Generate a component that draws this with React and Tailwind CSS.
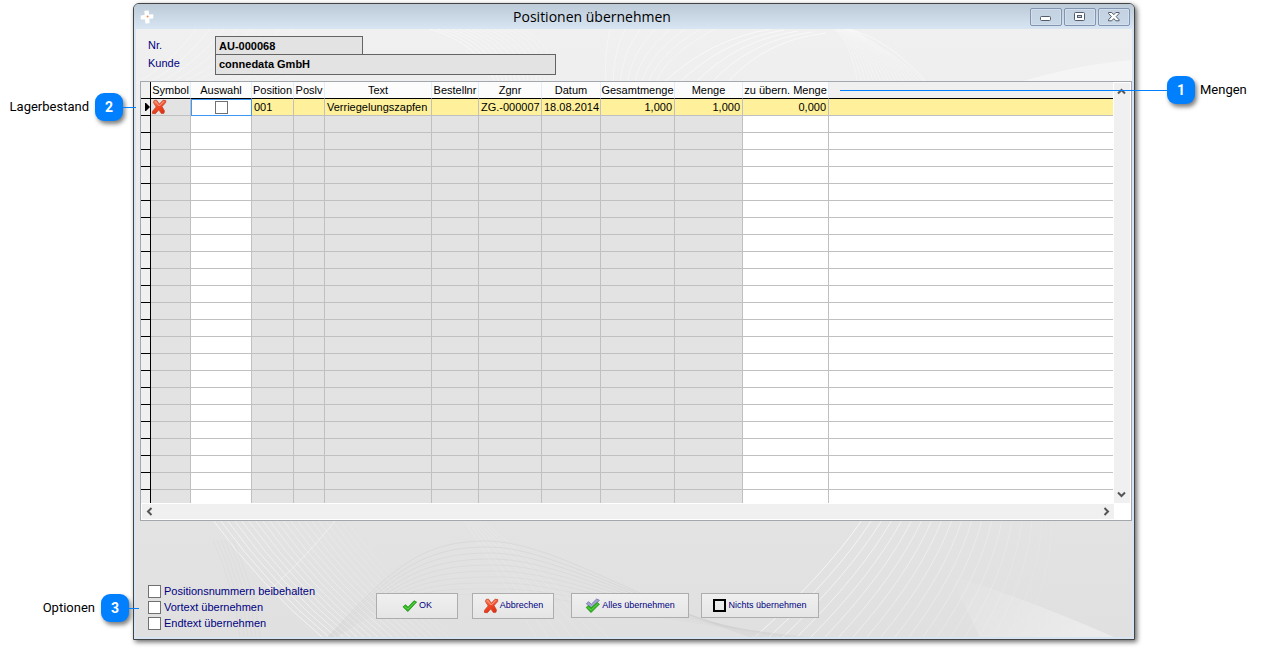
import React from "react";

const columns = [
  { label: "Symbol", width: "w-[40px]", align: "text-center", editable: false },
  { label: "Auswahl", width: "w-[61px]", align: "text-center", editable: true },
  { label: "Position", width: "w-[42px]", align: "text-left", value: "001" },
  { label: "Poslv", width: "w-[31px]", align: "text-left", value: "" },
  { label: "Text", width: "w-[107px]", align: "text-left", value: "Verriegelungszapfen" },
  { label: "Bestellnr", width: "w-[47px]", align: "text-left", value: "" },
  { label: "Zgnr", width: "w-[63px]", align: "text-left", value: "ZG.-000007" },
  { label: "Datum", width: "w-[59px]", align: "text-left", value: "18.08.2014" },
  { label: "Gesamtmenge", width: "w-[74px]", align: "text-right", value: "1,000" },
  { label: "Menge", width: "w-[68px]", align: "text-right", value: "1,000" },
  { label: "zu übern. Menge", width: "w-[86px]", align: "text-right", value: "0,000", editable: true },
];

const range = (n) => Array.from({ length: n }, (_, i) => i);

function CrossIcon({ className }) {
  return (
    <svg viewBox="0 0 16 16" className={className} aria-hidden="true">
      <defs>
        <linearGradient id="cross" x1="0" y1="0" x2="0.4" y2="1">
          <stop offset="0" stopColor="#ff8a62" />
          <stop offset="0.55" stopColor="#f24a28" />
          <stop offset="1" stopColor="#e03412" />
        </linearGradient>
      </defs>
      <path
        d="M3.2 1.4 5.6 1.2 8.4 5.2 12 1.2 14.8 1.6 14.6 3.6 11 7.6 13.4 11.8 13 14.2 10.4 14.5 7.8 10.8 4.4 14.7 1.4 14.4 1.6 12.2 5.2 7.9 2.4 3.4Z"
        fill="url(#cross)"
        stroke="#c94027"
        strokeWidth="0.8"
        strokeLinejoin="round"
      />
      <path d="M4.2 2.4 8.3 7 12.8 2.4" fill="none" stroke="#ffb199" strokeWidth="0.9" />
    </svg>
  );
}

function CheckIcon({ className }) {
  return (
    <svg viewBox="0 0 16 14" className={className} aria-hidden="true">
      <path
        d="M1 7.8 3.6 5.8 6 8.2 12 1.8 14.6 3 5.8 12.6Z"
        fill="#2fb51f"
        stroke="#1f8f16"
        strokeWidth="0.8"
        strokeLinejoin="round"
      />
      <path d="M2.4 7.4 6 10 13 2.8" fill="none" stroke="#6fdc55" strokeWidth="0.8" />
    </svg>
  );
}

function DoubleCheckIcon({ className }) {
  return (
    <svg viewBox="0 0 16 16" className={className} aria-hidden="true">
      <path
        d="M1.4 5.6 3.6 3.8 6.4 6.2 11.6 1 14.4 2.2 6.4 11Z"
        fill="#a3a5d3"
        stroke="#6d6fa6"
        strokeWidth="0.8"
        strokeLinejoin="round"
      />
      <path
        d="M1.2 9.4 3.6 7.6 6.2 9.8 12.2 4.4 14.4 6.2 6 14.6Z"
        fill="#2fb51f"
        stroke="#1f8f16"
        strokeWidth="0.8"
        strokeLinejoin="round"
      />
      <path d="M2.6 9.2 6.2 12 13 5.6" fill="none" stroke="#6fdc55" strokeWidth="0.8" />
    </svg>
  );
}

function Chevron({ d }) {
  return (
    <svg viewBox="0 0 9 9" className="h-[9px] w-[9px]" aria-hidden="true">
      <path d={d} fill="none" stroke="#555" strokeWidth="2" />
    </svg>
  );
}

function Backdrop() {
  return (
    <svg
      viewBox="136 29 996 608"
      preserveAspectRatio="none"
      className="absolute inset-0 h-full w-full"
      aria-hidden="true"
    >
      <defs>
        <linearGradient id="wedge" x1="0" y1="0" x2="1" y2="0.4">
          <stop offset="0" stopColor="#fff" stopOpacity="0" />
          <stop offset="1" stopColor="#fff" stopOpacity="0.35" />
        </linearGradient>
      </defs>
      <g fill="none" stroke="#fff">
        {range(14).map((i) => (
          <path key={i} d={`M${136 + i * 11} 84 Q${172 + i * 13} 62 ${196 + i * 14} 29`} opacity={0.35 - i * 0.02} />
        ))}
        {range(14).map((i) => (
          <path key={i} d={`M${430 + i * 7} 29 Q${480 + i * 6} 44 ${496 + i * 4} 84`} opacity={0.45 - i * 0.02} />
        ))}
        {range(8).map((i) => (
          <path key={i} d={`M${606 + i * 7} 84 Q${604 + i * 9} 54 ${610 + i * 15} 29`} opacity="0.35" />
        ))}
        {range(5).map((i) => (
          <path key={i} d={`M${662 + i * 16} 84 Q${708 + i * 14} 40 ${770 + i * 14} ${29 + i}`} opacity="0.55" />
        ))}
        {range(18).map((i) => (
          <path key={i} d={`M${834 + i} 29 Q${850 + i * 3} ${40 + i} ${858 + i * 4} 84`} opacity="0.3" />
        ))}
        <path d="M846 29 Q886 36 928 84" opacity="0.5" />
      </g>
      <path d="M1020 82 Q1080 64 1132 60 V82Z" fill="#fff" opacity="0.4" />

      <g fill="none" stroke="#fff">
        {range(20).map((i) => (
          <path key={i} d={`M${213 + i * 7} 520 Q${260 + i * 7} 585 ${322 + i * 7} 637`} opacity={0.6 - i * 0.026} />
        ))}
        {range(7).map((i) => (
          <path key={i} d={`M${464 + i * 3} 520 Q${500 + i * 8} 575 ${536 + i * 12} 637`} opacity="0.15" />
        ))}
        <path d="M336 520 Q290 576 250 606" opacity="0.4" />
        {range(20).map((i) => (
          <path
            key={i}
            d={`M${755 + i * 14} 637 Q${824 + i * 12} 575 ${862 + i * 10} 520`}
            opacity={0.65 - i * 0.031}
          />
        ))}
      </g>
      <g fill="none" stroke="#cfcfcf">
        {range(10).map((i) => (
          <path
            key={i}
            d={`M${328 + i} 637 C${390 + i * 2} ${570 + i * 2} ${420 + i * 2} ${541 + i * 6} ${486 + i * 2} ${541 + i * 6} S640 ${602 + i * 2} ${752 + i * 6} 637`}
            opacity={0.5 - i * 0.03}
          />
        ))}
        {range(6).map((i) => (
          <path key={i} d={`M${213 + i * 4} 540 Q${235 + i * 4} 590 ${240 + i * 4} 637`} opacity="0.25" />
        ))}
      </g>
      <path d="M950 575 Q1030 600 1114 637 H980Z" fill="url(#wedge)" />
    </svg>
  );
}

function Badge({ children, line }) {
  return (
    <span className="relative flex h-7 w-7 shrink-0 items-center justify-center rounded-[9px] bg-[#0080ff] text-sm font-bold text-white shadow-[2px_3px_4px_rgba(0,0,0,0.5)]">
      {children}
      <span className={`absolute top-[14px] h-px bg-[#0080ff] ${line}`} />
    </span>
  );
}

function CaptionButton({ label, children }) {
  return (
    <button
      type="button"
      aria-label={label}
      className="flex h-[18px] w-8 items-center justify-center rounded-[2px] border border-[#8295b0] bg-linear-to-b from-[#c3d1e0] to-[#c9d8e8] shadow-[inset_0_0_0_1px_#d3dfec]"
    >
      <svg viewBox="0 0 12 10" className="h-[10px] w-3" aria-hidden="true">
        {children}
      </svg>
    </button>
  );
}

function ActionButton({ className, children }) {
  return (
    <button
      type="button"
      className={`flex items-center justify-center border border-[#adadad] bg-linear-to-b from-[#f0f0f0] to-[#e5e5e5] font-['Liberation_Sans',Arial,sans-serif] text-[9px] whitespace-nowrap text-[#000080] ${className}`}
    >
      {children}
    </button>
  );
}

function Option({ label }) {
  return (
    <label className="flex h-[15px] items-center gap-[3px] whitespace-nowrap">
      <input type="checkbox" className="h-[13px] w-[13px] appearance-none border border-[#707070] bg-white checked:bg-[#000080]" />
      {label}
    </label>
  );
}

function PositionsTable() {
  return (
    <table className="w-full table-fixed border-separate border-spacing-0 text-[11px] leading-4 text-black">
      <colgroup>
        <col className="w-[10px]" />
        {columns.map((c) => (
          <col key={c.label} className={c.width} />
        ))}
        <col />
      </colgroup>
      <thead>
        <tr className="h-[17px]">
          <th className="border-r border-b border-black bg-[#f0f0f0] p-0" />
          {columns.map((c) => (
            <th
              key={c.label}
              className="border-r border-b border-r-[#e3eefa] border-b-black bg-[#fcfcfc] p-0 text-center font-normal whitespace-nowrap"
            >
              {c.label}
            </th>
          ))}
          <th className="border-b border-black bg-[#f0f0f0] p-0" />
        </tr>
      </thead>
      <tbody>
        <tr className="h-[17px]">
          <td className="border-r border-b border-black bg-[#f0f0f0] p-0">
            <svg viewBox="0 0 9 8" className="block h-2 w-[9px]" aria-hidden="true">
              <path d="M4 0h1l4 4-4 4H4z" fill="#000" />
            </svg>
          </td>
          <td className="border-r border-b border-[#c0c0c0] bg-[#e3e3e3] p-0">
            <CrossIcon className="block h-4 w-4" />
          </td>
          <td className="bg-white p-0 shadow-[inset_0_0_0_1px_#3f97f5]">
            <input
              type="checkbox"
              aria-label="Auswahl"
              className="mx-auto block h-[13px] w-[13px] appearance-none border border-[#707070] bg-white checked:bg-[#000080]"
            />
          </td>
          {columns.slice(2).map((c) => (
            <td
              key={c.label}
              className={`border-r border-b border-[#c0c0c0] bg-[#fff09b] px-[2px] py-0 whitespace-nowrap ${c.align}`}
            >
              {c.value}
            </td>
          ))}
          <td className="border-b border-[#c0c0c0] bg-[#fff09b] p-0" />
        </tr>
        {range(23).map((r) => {
          const last = r === 22;
          const edge = last ? "" : "border-b";
          return (
            <tr key={r} className={last ? "h-[13px]" : "h-[17px]"}>
              <td className={`border-r border-black bg-[#f0f0f0] p-0 ${edge}`} />
              {columns.map((c) => (
                <td
                  key={c.label}
                  className={`border-r border-[#c0c0c0] p-0 ${edge} ${c.editable ? "bg-white" : "bg-[#e3e3e3]"}`}
                />
              ))}
              <td className={`border-[#c0c0c0] bg-white p-0 ${edge}`} />
            </tr>
          );
        })}
      </tbody>
    </table>
  );
}

function Window() {
  return (
    <main className="flex min-w-0 flex-1 flex-col rounded-t-[6px] border border-[#444] bg-[#d7e4f2] px-[2px] pb-[2px] shadow-[2px_2px_5px_rgba(0,0,0,0.6)]">
      <header className="-mx-[2px] flex h-[25px] items-center rounded-t-[5px] bg-linear-to-b from-[#bccad8] to-[#d8e5f3] pr-1 pl-[6px]">
        <svg viewBox="0 0 14 14" className="h-[14px] w-[14px] shrink-0" aria-hidden="true">
          <path d="M4.4.8 8.8.4 9 4.6 13.4 4.2 13.2 8.6 9.4 8.8 9.6 13.2 5.4 13.4 5 9.4.8 9.6.6 5.6 4.6 5Z" fill="#fff" />
          <circle cx="7.6" cy="6.4" r="1" fill="#f08a4a" />
        </svg>
        <h1 className="flex-1 text-center font-['Open_Sans','Noto_Sans',sans-serif] text-sm leading-5 font-normal text-black">
          Positionen übernehmen
        </h1>
        <div className="flex gap-[2px]">
          <CaptionButton label="Minimieren">
            <rect x="0.5" y="4.5" width="10" height="4" rx="1" fill="#fff" stroke="#515b6b" />
          </CaptionButton>
          <CaptionButton label="Maximieren">
            <rect x="0.5" y="0.5" width="10" height="8" rx="1" fill="#fff" stroke="#515b6b" />
            <rect x="3.5" y="3.5" width="4" height="2" fill="#c3d1e0" stroke="#515b6b" />
          </CaptionButton>
          <CaptionButton label="Schließen">
            <path
              d="M.5.5h3.200L5.800 2.700 7.900.5h3.200v1L8.200 4.600 11.100 7.800v1H7.900L5.800 6.600 3.700 8.800H.5v-1L3.400 4.600.5 1.500z"
              fill="#fff"
              stroke="#515b6b"
            />
          </CaptionButton>
        </div>
      </header>

      <div className="relative flex flex-col bg-linear-to-b from-[#f0f0f0] to-[#e0e0e0]">
        <Backdrop />
        <div className="relative flex flex-col pl-1">
          <div className="grid grid-cols-[67px_1fr] pt-[7px] pl-2 text-[11px] text-[#000080]">
            <label htmlFor="nr" className="flex h-[18px] items-center">Nr.</label>
            <input
              id="nr"
              readOnly
              defaultValue="AU-000068"
              className="h-[19px] w-[148px] border border-[#646464] bg-[#e3e3e3] px-[3px] font-bold text-black"
            />
            <label htmlFor="kunde" className="flex h-4 items-center">Kunde</label>
            <input
              id="kunde"
              readOnly
              defaultValue="connedata GmbH"
              className="-mt-px h-[21px] w-[341px] border border-[#646464] bg-[#e3e3e3] px-[3px] pb-[2px] font-bold text-black"
            />
          </div>

          <section className="mt-[6px] border border-[#a3a8ae] bg-white">
            <div className="flex">
              <div className="min-w-0 flex-1">
                <PositionsTable />
              </div>
              <div className="mt-px mr-px ml-px flex w-4 flex-col items-center justify-between bg-[#f0f0f0] py-1 pr-[2px]">
                <Chevron d="M1 6.500 4.500 3 8 6.500" />
                <Chevron d="M1 2.500 4.500 6 8 2.500" />
              </div>
            </div>
            <div className="mt-px mr-[17px] mb-px ml-px flex h-[15px] items-center justify-between bg-[#f0f0f0] px-[3px]">
              <Chevron d="M6.500 1 3 4.500 6.500 8" />
              <Chevron d="M2.500 1 6 4.500 2.500 8" />
            </div>
          </section>

          <footer className="flex items-start pt-[63px] pb-[6px] pl-2 text-[11px] text-[#000080]">
            <div className="flex w-[228px] flex-col gap-px">
              <Option label="Positionsnummern beibehalten" />
              <Option label="Vortext übernehmen" />
              <Option label="Endtext übernehmen" />
            </div>
            <div className="flex items-start gap-[14px] pt-[9px]">
              <ActionButton className="h-[26px] w-[82px] gap-px">
                <CheckIcon className="h-[14px] w-4" />
                OK
              </ActionButton>
              <ActionButton className="h-[26px] w-[82px] gap-px">
                <CrossIcon className="h-4 w-4" />
                Abbrechen
              </ActionButton>
              <ActionButton className="ml-[3px] h-[25px] w-[118px] gap-px">
                <DoubleCheckIcon className="h-4 w-4" />
                Alles übernehmen
              </ActionButton>
              <ActionButton className="-ml-[2px] h-[25px] w-[118px] gap-[2px]">
                <span className="h-[13px] w-[13px] border-2 border-black" />
                Nichts übernehmen
              </ActionButton>
            </div>
          </footer>
        </div>
      </div>
    </main>
  );
}

export default function App() {
  return (
    <div className="flex bg-white pt-[3px] pb-2 font-['Liberation_Sans',Arial,sans-serif]">
      <aside className="z-10 flex w-[133px] shrink-0 flex-col items-end justify-between pt-[90px] pb-[18px] font-[Roboto,sans-serif] text-[13px] text-black">
        <div className="flex items-center gap-[6px] pr-[10px]">
          Lagerbestand
          <Badge line="left-full w-[13px]">2</Badge>
        </div>
        <div className="flex items-center gap-[6px] pr-1">
          Optionen
          <Badge line="left-full w-[10px]">3</Badge>
        </div>
      </aside>
      <Window />
      <aside className="z-10 w-[127px] shrink-0 pt-[73px] font-[Roboto,sans-serif] text-[13px] text-black">
        <div className="flex items-center gap-[5px] pl-8">
          <Badge line="right-full w-[327px]">1</Badge>
          Mengen
        </div>
      </aside>
    </div>
  );
}
